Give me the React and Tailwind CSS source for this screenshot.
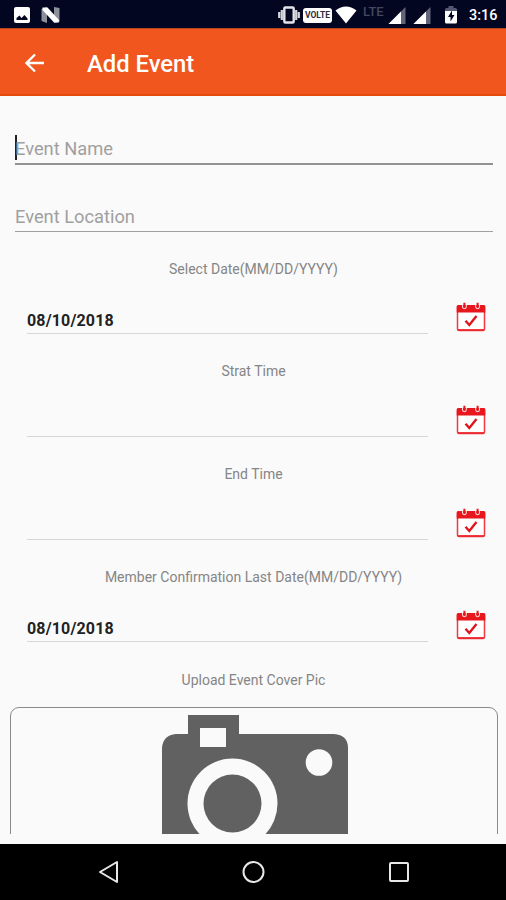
const dateFields = [
  { label: 'Select Date(MM/DD/YYYY)', value: '08/10/2018', height: 'h-[102px]' },
  { label: 'Strat Time', value: '', height: 'h-[103px]' },
  { label: 'End Time', value: '', height: 'h-[103px]' },
  { label: 'Member Confirmation Last Date(MM/DD/YYYY)', value: '08/10/2018', height: 'h-[102px]' }
];

function CalendarIcon() {
  return (
    <svg width="30" height="30" viewBox="0 0 30 30" fill="none">
      <rect x="1.5" y="4" width="27" height="24.500" rx="1.5" fill="#fff" stroke="#ee3a40" strokeWidth="1.5" />
      <path d="M2 28H28" stroke="#ea2a30" strokeWidth="1.800" />
      <path d="M0.700 10.500V4.500Q0.700 3 2.200 3H27.800Q29.300 3 29.300 4.500V10.500Z" fill="#e8161d" />
      <path d="M6.500 3V4.800a1.900 1.900 0 0 0 3.800 0V3M19.700 3V4.800a1.900 1.900 0 0 0 3.800 0V3" fill="#e8161d" stroke="#fadcdc" strokeWidth="1.100" />
      <path d="M8.400 0.800V5M21.600 0.800V5" stroke="#e8161d" strokeWidth="2" />
      <path d="M9.500 18.800L13.300 23L20.500 14" stroke="#e0141b" strokeWidth="2.400" />
    </svg>
  );
}

function SignalIcon() {
  return (
    <svg width="18" height="18" viewBox="0 0 18 18">
      <path d="M0.500 17L17.500 0V17Z" fill="#63657a" />
      <path d="M0.500 17L13 4.500V17Z" fill="#fff" />
    </svg>
  );
}

function StatusBar() {
  return (
    <div className="flex h-[28px] shrink-0 items-center bg-[#030620] pl-[14px] pr-[9px] text-white">
      <svg width="16" height="16" viewBox="0 0 16 16" className="mt-[2px]">
        <rect width="16" height="16" rx="2" fill="#fff" />
        <path d="M2.500 13V11L5.500 8.500L7.500 11L10.500 8L13.500 11.500V13Z" fill="#030620" />
      </svg>
      <svg width="19" height="16" viewBox="0 0 19 16" className="ml-[11px] mt-[2px]">
        <path d="M0.500 2L6 0V16L0.500 14Z" fill="#8d8f9a" />
        <path d="M13 0L18.500 1V15L13 16Z" fill="#8d8f9a" />
        <path d="M1.500 0.500H6.500L18 13L17.500 15.500H13L1.500 3Z" fill="#fff" />
      </svg>
      <svg width="22" height="18" viewBox="0 0 22 18" className="ml-auto mt-[1px]">
        <path d="M1.200 6V12M3.800 4V14M18.200 4V14M20.800 6V12" stroke="#d6d7dd" strokeWidth="2.200" />
        <rect x="6.300" y="1.500" width="9.400" height="15" rx="1" fill="#030620" stroke="#e4e4e8" strokeWidth="2.400" />
      </svg>
      <div className="ml-[3px] mt-[2px] flex h-[15px] w-[29px] items-center justify-center rounded-[3px] bg-white text-[8.5px] font-bold text-[#2c2d3d]">
        VOLTE
      </div>
      <svg width="22" height="18" viewBox="0 0 22 18" className="ml-[3px] mt-[1px]">
        <path d="M0.500 4.500Q11 -3.500 21.500 4.500L11 17.500Z" fill="#fff" />
      </svg>
      <span className="mb-[5px] ml-[6px] w-[23px] text-[13px] font-medium leading-none text-[#44465c]">LTE</span>
      <div className="ml-[2px] mr-px mt-[3px] flex gap-[7px]">
        <SignalIcon />
        <SignalIcon />
      </div>
      <svg width="12" height="18" viewBox="0 0 12 18" className="ml-[13px] mt-[1px]">
        <path d="M0 3.500Q0 2 1.500 2H3.500V0H8.500V2H10.500Q12 2 12 3.500V6H0Z" fill="#555770" />
        <path d="M0 5H12V16Q12 17.500 10.500 17.500H1.500Q0 17.500 0 16Z" fill="#fff" />
        <path d="M7 4.500L3 11H5.500V15.500L9.500 9H7Z" fill="#030620" />
      </svg>
      <span className="ml-[12px] mt-[4px] w-[28px] whitespace-nowrap text-[14.4px] font-medium leading-none">3:16</span>
    </div>
  );
}

function Header() {
  return (
    <header className="flex h-[68px] shrink-0 items-center border-b-2 border-t border-b-[#e54b0d] border-t-[#b24620] bg-[#f0561d] text-white">
      <svg width="20" height="20" viewBox="0 0 20 20" fill="none" className="ml-[25px] mt-[2px]">
        <path d="M19 10H1.500M10 1.500L1.500 10L10 18.500" stroke="#fff" strokeWidth="2.300" />
      </svg>
      <h1 className="ml-[42px] mt-[6px] text-[23.8px] font-medium leading-none">Add Event</h1>
    </header>
  );
}

function DateField({ field }) {
  return (
    <div className={`flex shrink-0 flex-col ${field.height}`}>
      <div className="mt-[28px] pl-px text-center text-[14px] leading-[19px] text-[#858585]">{field.label}</div>
      <div className="ml-[27px] mr-[20px] flex flex-1 items-end">
        <div className="h-[28px] w-[401px] border-b border-[#d6d6d6] text-[16px] font-bold leading-[29px] tracking-[0.15px] text-[#222]">
          {field.value}
        </div>
        <div className="mb-[2px] ml-[28px]">
          <CalendarIcon />
        </div>
      </div>
    </div>
  );
}

function CameraImage() {
  return (
    <svg width="188" height="150" viewBox="0 0 188 150" className="ml-[150px] mt-[7px] shrink-0">
      <path
        d="M27 0H78V19H173Q187 20 187 33V150H1V33Q2 20 15 19H27Z"
        fill="#616161"
      />
      <rect x="39" y="13" width="26" height="19" fill="#fafafa" />
      <circle cx="71.500" cy="88.500" r="45" fill="#fafafa" />
      <circle cx="71.500" cy="88.500" r="29" fill="#616161" />
      <circle cx="158" cy="47.500" r="13.300" fill="#fafafa" />
    </svg>
  );
}

function NavigationBar() {
  return (
    <nav className="flex h-[56px] shrink-0 items-center bg-black">
      <svg width="22" height="24" viewBox="0 0 22 24" fill="none" className="ml-[98px]">
        <path d="M2 12L19 2V22Z" stroke="#e8e8e8" strokeWidth="2" strokeLinejoin="round" />
      </svg>
      <svg width="24" height="24" viewBox="0 0 24 24" fill="none" className="ml-[122px]">
        <circle cx="11.500" cy="12" r="10" stroke="#e8e8e8" strokeWidth="2" />
      </svg>
      <svg width="20" height="20" viewBox="0 0 20 20" fill="none" className="ml-[123px]">
        <rect x="1" y="1" width="18" height="18" rx="1" stroke="#e8e8e8" strokeWidth="2" />
      </svg>
    </nav>
  );
}

export default function App() {
  return (
    <div className="flex h-[900px] w-[506px] flex-col overflow-hidden bg-[#fafafa] font-['Roboto',sans-serif]">
      <StatusBar />
      <Header />
      <main className="flex h-[738px] shrink-0 flex-col overflow-hidden">
        <div className="ml-[15px] mr-[13px] flex h-[69px] shrink-0 items-end border-b-2 border-[#929292]">
          <div className="mb-[3px] h-[25px] w-[2px] bg-[#222]" />
          <div className="-ml-[2px] text-[18.3px] leading-[28px] text-[#a0a0a0]">Event Name</div>
        </div>
        <div className="ml-[15px] mr-[13px] flex h-[67px] shrink-0 items-end border-b border-[#a0a0a0]">
          <div className="text-[18.3px] leading-[28px] text-[#a0a0a0]">Event Location</div>
        </div>
        {dateFields.map((field) => (
          <DateField key={field.label} field={field} />
        ))}
        <div className="mt-[28px] pl-px text-center text-[14px] leading-[20px] text-[#858585]">
          Upload Event Cover Pic
        </div>
        <div className="ml-[10px] mt-[17px] flex h-[200px] w-[488px] shrink-0 rounded-[9px] border border-[#8a8a8a]">
          <CameraImage />
        </div>
      </main>
      <div className="h-[10px] shrink-0" />
      <NavigationBar />
    </div>
  );
}
